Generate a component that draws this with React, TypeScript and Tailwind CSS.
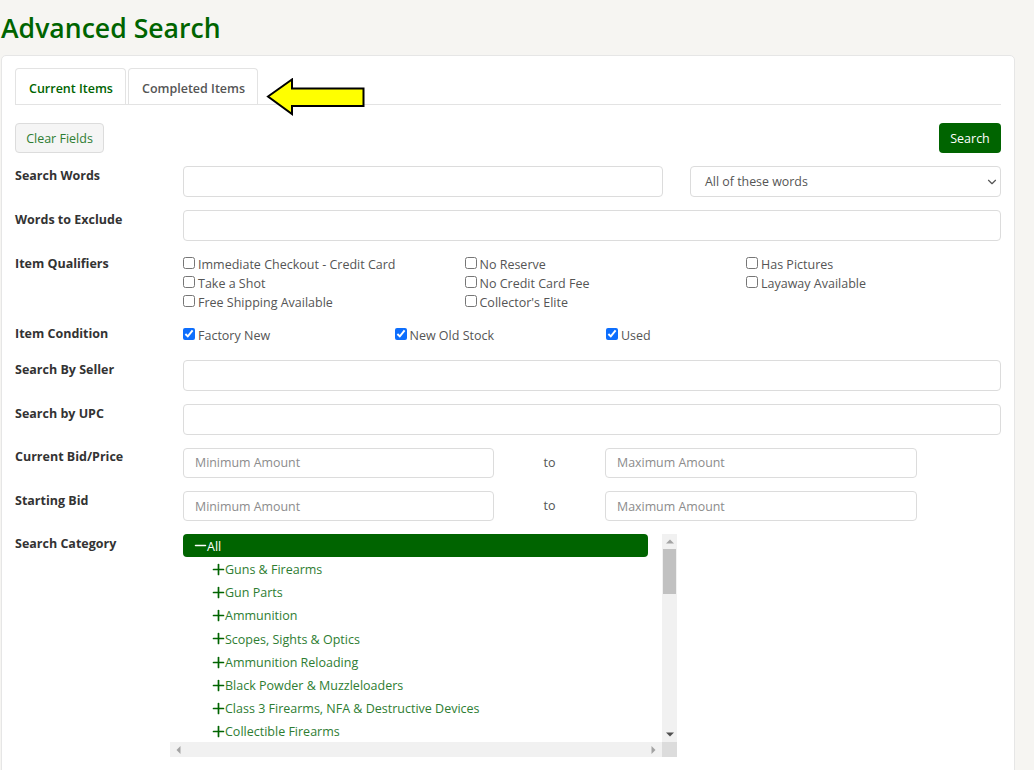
import React from 'react';
import { Plus, Minus, ChevronDown } from 'lucide-react';

const qualifiers = [
  ['Immediate Checkout - Credit Card', 'No Reserve', 'Has Pictures'],
  ['Take a Shot', 'No Credit Card Fee', 'Layaway Available'],
  ['Free Shipping Available', "Collector's Elite", ''],
];

const conditions = ['Factory New', 'New Old Stock', 'Used'];

const categories = [
  'Guns & Firearms',
  'Gun Parts',
  'Ammunition',
  'Scopes, Sights & Optics',
  'Ammunition Reloading',
  'Black Powder & Muzzleloaders',
  'Class 3 Firearms, NFA & Destructive Devices',
  'Collectible Firearms',
];

const inputCls = 'block w-full h-[31px] rounded-[4px] border border-[#dcdcdc] bg-white px-[11px] text-[12.4px] text-[#555] placeholder:text-[#8c8c8c] outline-none';
const labelCls = 'w-[168px] shrink-0 pt-[1px] text-[12.5px] font-bold text-[#333]';

const Check = ({ label, checked }: { label: string; checked?: boolean }) => (
  <label className="flex items-center gap-[3px] h-[19px] text-[12.5px] text-[#555]">
    <input type="checkbox" defaultChecked={checked} className="w-[12px] h-[12px] mb-[6px] accent-[#0d6efd]" />
    {label}
  </label>
);

export default function App() {
  return (
    <div className="bg-white h-[772px] overflow-hidden font-['Open_Sans',sans-serif]">
      <div className="bg-[#f6f5f2] h-[770px] overflow-hidden pl-[1px] pr-[19px]">
        <h1 className="h-[55px] pt-[8px] text-[26.6px] leading-[40px] font-semibold text-[#006400]">Advanced Search</h1>

        <div className="relative bg-white border border-[#e6e6e6] rounded-t-[5px] h-[740px] px-[13px] pt-[13px]">
          {/* tabs */}
          <div className="flex items-end gap-[2px] h-[36px] border-b border-[#e3e3e3]">
            <div className="h-[36px] pl-[13px] pr-[12px] pt-[5px] flex items-center bg-white border border-b-0 border-[#e3e3e3] rounded-t-[4px] text-[12.5px] font-semibold text-[#006400]">Current Items</div>
            <div className="h-[36px] pl-[13px] pr-[12px] pt-[5px] flex items-center bg-white border border-b-0 border-[#e3e3e3] rounded-t-[4px] text-[12.5px] font-semibold text-[#555]">Completed Items</div>
          </div>

          <svg className="absolute left-[264px] top-[22px]" width="100" height="38" viewBox="0 0 100 38">
            <polygon points="2,18.5 26,1.5 26,10.5 97.5,10.5 97.5,28 26,28 26,36" fill="#ffff00" stroke="#000" strokeWidth="2" />
          </svg>

          <div className="flex justify-between mt-[18px]">
            <button className="h-[30px] w-[89px] pt-[2px] rounded-[4px] border border-[#dcdcdc] bg-[#f5f5f5] text-[12.5px] text-[#2e7d32]">Clear Fields</button>
            <button className="h-[30px] w-[62px] pt-[2px] rounded-[4px] bg-[#006400] text-[12.5px] text-white">Search</button>
          </div>

          <div className="flex mt-[13px]">
            <div className={labelCls}>Search Words</div>
            <div className="flex-1 flex gap-[27px]">
              <input className={inputCls + ' !w-[480px]'} />
              <div className="flex-1 h-[31px] rounded-[4px] border border-[#dcdcdc] pl-[14px] pt-[1px] pr-[1px] flex items-center justify-between text-[12.4px] text-[#555]">
                All of these words
                <ChevronDown size={14} strokeWidth={2} className="text-[#555]" />
              </div>
            </div>
          </div>

          <div className="flex mt-[13px]">
            <div className={labelCls}>Words to Exclude</div>
            <div className="flex-1"><input className={inputCls} /></div>
          </div>

          <div className="flex mt-[13px]">
            <div className={labelCls}>Item Qualifiers</div>
            <div className="flex-1 pt-[2px]">
              {qualifiers.map((row, i) => (
                <div key={i} className="grid grid-cols-[281.5px_281.5px_1fr]">
                  {row.map((q, j) => (q ? <Check key={j} label={q} /> : <div key={j} />))}
                </div>
              ))}
            </div>
          </div>

          <div className="flex mt-[11px]">
            <div className={labelCls}>Item Condition</div>
            <div className="flex-1 pt-[3px] grid grid-cols-[211.5px_211.5px_1fr]">
              {conditions.map((c) => <Check key={c} label={c} checked />)}
            </div>
          </div>

          <div className="flex mt-[14px]">
            <div className={labelCls}>Search By Seller</div>
            <div className="flex-1"><input className={inputCls} /></div>
          </div>

          <div className="flex mt-[13px]">
            <div className={labelCls}>Search by UPC</div>
            <div className="flex-1"><input className={inputCls} /></div>
          </div>

          <div className="flex mt-[13px]">
            <div className={labelCls + ' !pt-0'}>Current Bid/Price</div>
            <div className="flex-1 flex items-center">
              <input className={inputCls + ' !w-[311px] !h-[30px] pb-[1px]'} placeholder="Minimum Amount" />
              <div className="w-[111px] text-center text-[12.5px] text-[#555]">to</div>
              <input className={inputCls + ' !w-[312px] !h-[30px] pb-[1px]'} placeholder="Maximum Amount" />
            </div>
          </div>

          <div className="flex mt-[13px]">
            <div className={labelCls}>Starting Bid</div>
            <div className="flex-1 flex items-center">
              <input className={inputCls + ' !w-[311px] !h-[30px]'} placeholder="Minimum Amount" />
              <div className="w-[111px] pt-[1px] text-center text-[12.5px] text-[#555]">to</div>
              <input className={inputCls + ' !w-[312px] !h-[30px]'} placeholder="Maximum Amount" />
            </div>
          </div>

          <div className="flex mt-[13px]">
            <div className="w-[155px] shrink-0 pt-[1px] text-[12.5px] font-bold text-[#333]">Search Category</div>
            <div className="w-[507px] h-[223px] flex flex-col">
              <div className="flex h-[208px]">
                <div className="w-[492px] overflow-hidden pl-[13px] pr-[14px]">
                  <div className="h-[23px] rounded-[4px] bg-[#006400] text-white flex items-center pl-[12px] pt-[4px] text-[12.5px]">
                    <Minus size={17} strokeWidth={2.2} className="-ml-[3.5px] -mr-[1.5px] -mt-[4px]" />
                    All
                  </div>
                  <div className="pt-[2px]">
                    {categories.map((c) => (
                      <div key={c} className="h-[23.15px] pl-[30px] flex items-center text-[12.5px] text-[#2e7d32] whitespace-nowrap">
                        <Plus size={17} strokeWidth={2.4} className="text-[#006400] -ml-[3.5px] -mr-[1.5px] -mt-[2px]" />
                        {c}
                      </div>
                    ))}
                  </div>
                </div>
                <div className="w-[15px] bg-[#f1f1f1] flex flex-col items-center">
                  <svg className="mt-[5px]" width="8" height="5" viewBox="0 0 8 5"><polygon points="4,0.5 8,4.5 0,4.5" fill="#a3a3a3" /></svg>
                  <div className="w-[13px] h-[45px] mt-[5px] bg-[#c1c1c1]" />
                  <div className="flex-1" />
                  <svg className="mb-[5px]" width="8" height="5" viewBox="0 0 8 5"><polygon points="0,0.5 8,0.5 4,4.5" fill="#505050" /></svg>
                </div>
              </div>
              <div className="flex h-[15px]">
                <div className="flex-1 bg-[#f1f1f1] flex items-center justify-between px-[6px]">
                  <svg width="5" height="8" viewBox="0 0 5 8"><polygon points="4.5,0 4.5,8 0.5,4" fill="#a3a3a3" /></svg>
                  <svg width="5" height="8" viewBox="0 0 5 8"><polygon points="0.5,0 0.5,8 4.5,4" fill="#a3a3a3" /></svg>
                </div>
                <div className="w-[15px] bg-[#dcdcdc]" />
              </div>
            </div>
          </div>
        </div>
      </div>
    </div>
  );
}
